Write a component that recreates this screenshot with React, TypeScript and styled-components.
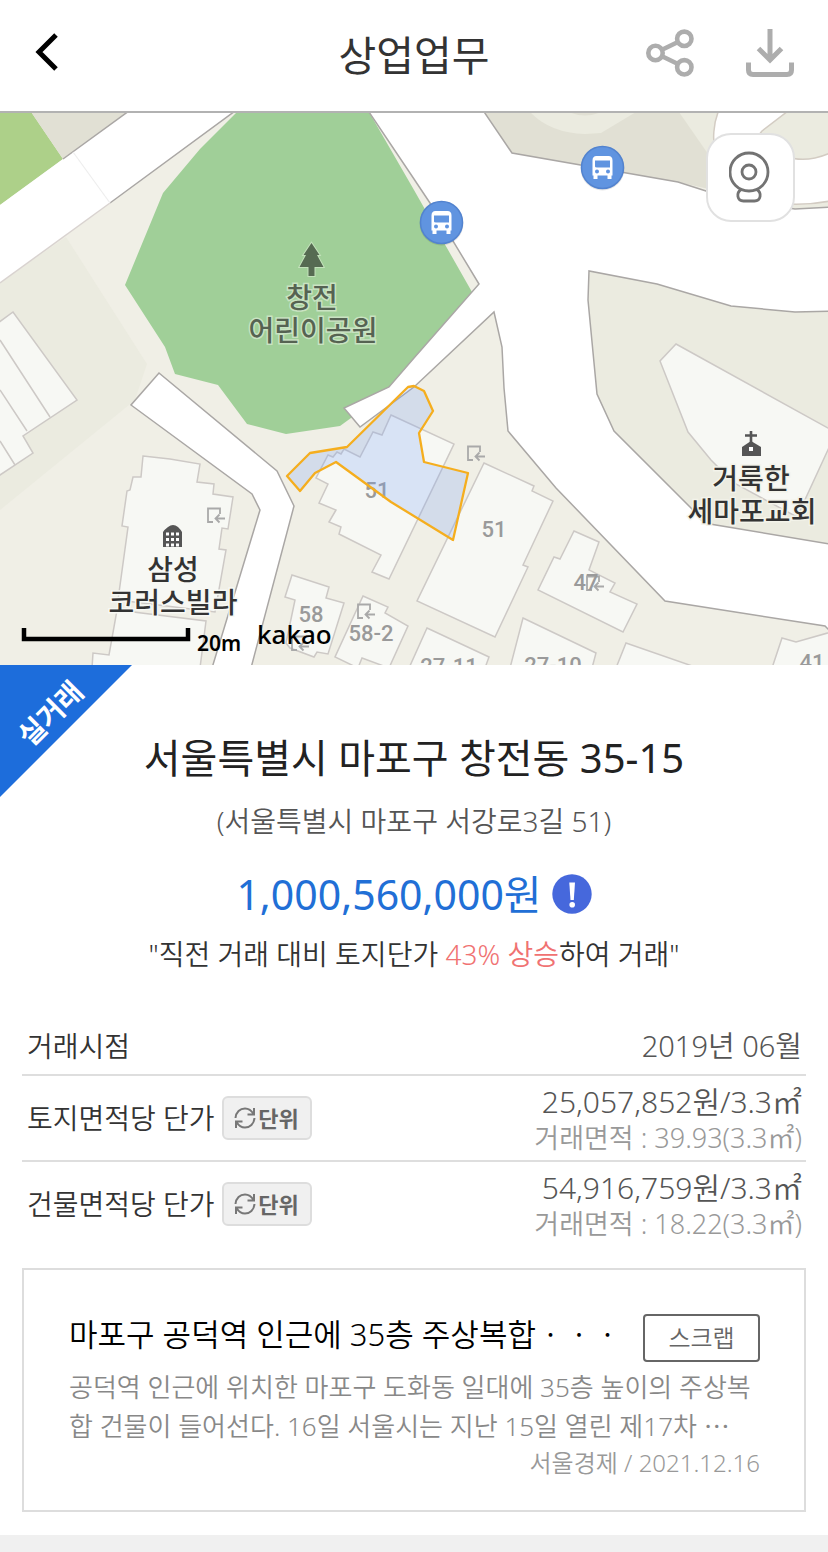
import React from "react";
import styled, { createGlobalStyle } from "styled-components";

const GlobalStyle = createGlobalStyle`
  *, *::before, *::after { box-sizing: border-box; }
  body {
    margin: 0;
    background: #ffffff;
    color: #222222;
    font-family: "Noto Sans", "Noto Sans CJK KR", sans-serif;
    font-weight: 350;
  }
  button { font-family: inherit; padding: 0; cursor: pointer; }
  h1, h2, h3, p { margin: 0; }
`;

const Page = styled.main`
  min-height: 100vh;
  display: flex;
  flex-direction: column;
`;

const Header = styled.header`
  display: grid;
  grid-template-columns: 1fr auto 1fr;
  align-items: center;
  height: 113px;
  padding: 0 34px 6px;
  border-bottom: 2px solid #b2b2b2;
`;

const HeaderTitle = styled.h1`
  padding-top: 4px;
  font-size: 41px;
  line-height: 56px;
  font-weight: 400;
  color: #333333;
`;

const HeaderActions = styled.div`
  display: flex;
  justify-content: flex-end;
  gap: 52px;
`;

const IconButton = styled.button`
  display: flex;
  width: 48px;
  height: 48px;
  border: 0;
  background: none;
`;

const MapPanel = styled.section`
  position: relative;
  height: 552px;
  overflow: hidden;
  background: #f0efe6;
`;

const MapSvg = styled.svg`
  display: block;
  width: 100%;
  height: 100%;
`;

const RoadviewButton = styled.button`
  position: absolute;
  top: 20px;
  right: 33px;
  display: flex;
  align-items: center;
  justify-content: center;
  width: 89px;
  height: 89px;
  border: 2px solid #e1e1e1;
  border-radius: 25px;
  background: #ffffff;
`;

const Place = styled.text<{ $tone: string; $halo: string }>`
  font-family: "Noto Sans CJK KR", sans-serif;
  font-size: 28px;
  font-weight: 500;
  text-anchor: middle;
  fill: ${(p) => p.$tone};
  stroke: ${(p) => p.$halo};
  stroke-width: 3px;
  paint-order: stroke;
`;

const Lot = styled.text`
  font-family: Roboto, "Liberation Sans", sans-serif;
  font-size: 22px;
  font-weight: 500;
  text-anchor: middle;
  fill: #9a9a9a;
`;

const MapMark = styled.text<{ $size: number; $weight: number }>`
  font-family: "Noto Sans", sans-serif;
  font-size: ${(p) => p.$size}px;
  font-weight: ${(p) => p.$weight};
  fill: #000000;
`;

const Summary = styled.section`
  position: relative;
  display: flex;
  flex-direction: column;
  align-items: center;
  padding: 65px 22px 0;
  text-align: center;
`;

const Ribbon = styled.div`
  position: absolute;
  top: 0;
  left: 0;
  width: 132px;
  height: 132px;
  background: #1d6ddb;
  clip-path: polygon(0 0, 100% 0, 0 100%);
`;

const RibbonText = styled.span`
  position: absolute;
  top: 28px;
  left: 0;
  width: 100px;
  line-height: 40px;
  font-size: 28px;
  font-weight: 700;
  color: #ffffff;
  transform: rotate(-45deg);
`;

const Address = styled.h2`
  font-size: 40px;
  line-height: 56px;
  font-weight: 400;
  color: #222222;
`;

const RoadAddress = styled.p`
  margin-top: 15px;
  font-size: 28px;
  line-height: 40px;
  color: #555555;
`;

const PriceRow = styled.div`
  display: flex;
  align-items: center;
  gap: 10px;
  margin-top: 25px;
`;

const Price = styled.strong`
  font-size: 41px;
  line-height: 56px;
  font-weight: 400;
  color: #216fd6;
`;

const InfoButton = styled.button`
  display: flex;
  width: 40px;
  height: 40px;
  border: 0;
  background: none;
`;

const Quote = styled.p`
  margin-top: 12px;
  font-size: 28px;
  line-height: 40px;
  color: #333333;
`;

const Rise = styled.span`
  color: #f07272;
`;

const Facts = styled.div`
  padding: 44px 22px 0;
`;

const FactTable = styled.table`
  width: 100%;
  border-collapse: separate;
  border-spacing: 0;
`;

const FactRow = styled.tr`
  & + & > * { border-top: 2px solid #dedede; }
`;

const FactLabel = styled.th`
  height: 56px;
  padding: 0 0 0 5px;
  text-align: left;
  font-size: 28px;
  line-height: 36px;
  font-weight: 350;
  color: #333333;
`;

const LabelLine = styled.div`
  display: flex;
  align-items: center;
  gap: 7px;
`;

const FactValue = styled.td<{ $double?: boolean }>`
  padding: ${(p) => (p.$double ? "8px 4px 4px 0" : "0 4px 0 0")};
  text-align: right;
  font-size: ${(p) => (p.$double ? 30 : 29)}px;
  line-height: 36px;
  color: #555555;
`;

const FactNote = styled.div`
  font-size: 27px;
  line-height: 36px;
  color: #999999;
`;

const UnitButton = styled.button`
  display: flex;
  align-items: center;
  justify-content: center;
  gap: 2px;
  width: 90px;
  height: 44px;
  border: 2px solid #dddddd;
  border-radius: 6px;
  background: #f0f0f0;
  color: #666666;
  font-size: 22px;
  line-height: 32px;
  font-weight: 700;
`;

const NewsCard = styled.article`
  margin: 22px 22px 0;
  padding: 44px 44px 30px 45px;
  border: 2px solid #dddddd;
`;

const NewsHead = styled.div`
  display: flex;
  align-items: center;
  justify-content: space-between;
`;

const NewsTitle = styled.h3`
  font-size: 31px;
  line-height: 40px;
  font-weight: 350;
  color: #000000;
  padding-bottom: 8px;
  white-space: nowrap;
`;

const ScrapButton = styled.button`
  flex: none;
  width: 117px;
  height: 48px;
  border: 2px solid #666666;
  border-radius: 4px;
  background: #ffffff;
  color: #666666;
  font-size: 24px;
  line-height: 32px;
  font-weight: 350;
`;

const NewsBody = styled.p`
  margin-top: 6px;
  font-size: 26px;
  line-height: 39px;
  color: #888888;
  word-break: break-all;
`;

const NewsSource = styled.p`
  font-size: 24px;
  line-height: 34px;
  text-align: right;
  color: #999999;
`;

const SectionBand = styled.div`
  flex: 1;
  min-height: 17px;
  margin-top: 23px;
  background: #f0f0f0;
`;

const BackIcon = () => (
  <svg width="48" height="48" viewBox="0 0 48 48" fill="none" stroke="#000" strokeWidth="5" aria-hidden="true">
    <path d="M22 6 5 23 22 40" />
  </svg>
);

const ShareIcon = () => (
  <svg width="48" height="48" viewBox="0 0 48 48" fill="none" stroke="#adadad" strokeWidth="4.600" aria-hidden="true">
    <circle cx="9.500" cy="24" r="7.200" />
    <circle cx="38.300" cy="9.800" r="7.200" />
    <circle cx="38.300" cy="38.300" r="7.200" />
    <path d="M16 20.800 32 13M16 27.200 32 35" />
  </svg>
);

const DownloadIcon = () => (
  <svg width="48" height="48" viewBox="0 0 48 48" fill="none" stroke="#adadad" strokeWidth="5" aria-hidden="true">
    <path d="M24 0V31M12.500 19.500 24 31 35.500 19.500" />
    <path d="M2.500 33.500V41Q2.500 45.500 7 45.500H41Q45.500 45.500 45.500 41V33.500" />
  </svg>
);

const RoadviewIcon = () => (
  <svg width="44" height="54" viewBox="0 0 44 54" fill="none" stroke="#737373" strokeWidth="2.800" aria-hidden="true">
    <circle cx="20" cy="21" r="19" />
    <circle cx="20" cy="21" r="7" />
    <path d="M12 38.500C7 42 8 50 14.500 50H25.500C32 50 33 42 28 38.500" />
  </svg>
);

const AlertIcon = () => (
  <svg width="40" height="40" viewBox="0 0 40 40" aria-hidden="true">
    <circle cx="20" cy="20" r="19.700" fill="#4668dc" />
    <path d="M17.300 8.500H23L21.800 26H18.500Z" fill="#fff" />
    <circle cx="20.200" cy="30.800" r="2.800" fill="#fff" />
  </svg>
);

const RefreshIcon = () => (
  <svg width="22" height="22" viewBox="0 0 22 22" fill="none" stroke="#777" strokeWidth="2" aria-hidden="true">
    <path d="M1.500 11C2 5 6 1.500 11 1.500C14.500 1.500 17.500 3.500 19.500 7M20 1V7.500H13.500" />
    <path d="M20.500 11C20 17 16 20.500 11 20.500C7.500 20.500 4.500 18.500 2.500 15M2 21V14.500H8.500" />
  </svg>
);

const BusStop = ({ x, y }: { x: number; y: number }) => (
  <g transform={`translate(${x} ${y})`}>
    <circle r="22" cy="1" fill="#000" opacity="0.100" />
    <circle r="21" fill="#6094e0" stroke="#5283cf" strokeWidth="1.500" />
    <path
      fill="#fff"
      fillRule="evenodd"
      d="M-10 -7Q-10 -11.500 -6 -11.500H6Q10 -11.500 10 -7V8H9V11.500H5V8H-5V11.500H-9V8H-10ZM-7.500 -7H7.500V0H-5.500Q-7.500 0 -7.500 -1ZM-7.500 4A2 2 0 1 0 -3.500 4A2 2 0 1 0 -7.500 4ZM3.500 4A2 2 0 1 0 7.500 4A2 2 0 1 0 3.500 4Z"
    />
  </g>
);

const Entrance = ({ x, y }: { x: number; y: number }) => (
  <path
    transform={`translate(${x} ${y})`}
    d="M6 14H1V0.500H13V6M18 10.500H9M12.500 6.500 8.500 10.500 12.500 14.500"
    fill="none"
    stroke="#a9a9a9"
    strokeWidth="1.800"
  />
);

const buildings = [
  "-9,328 13,312 77,400 23,436 33,453 -9,481",
  "143,456 170,459 200,464 197,482 214,484 213,494 233,497 228,529 222,528 219,549 226,550 215,612 118,600 128,527 122,526 127,491 130,490 133,477 141,477",
  "117,610 206,621 200,668 92,668 93,653 109,655",
  "391,415 454,444 389,579 372,572 381,555 339,534 341,527 329,522 336,510 319,503 328,484 316,478 328,455 333,457 337,452 341,454 344,449 360,457 373,432 382,435",
  "484,463 534,486 532,491 553,501 523,565 528,567 495,637 417,601",
  "574,531 599,542 589,570 615,583 610,592 637,604 623,632 538,590 554,557 560,559",
  "427,628 489,657 485,668 409,668",
  "523,618 596,653 592,668 510,668",
  "626,643 698,668 616,668",
  "782,638 796,642 838,630 838,668 772,668",
  "292,575 329,587 326,598 344,603 328,654 317,652 314,657 290,648 286,643 295,600 285,597",
  "363,596 388,607 385,613 408,626 389,668 362,658 358,668 335,657",
  "676,344 828,428 838,428 797,517 734,483 711,460 688,432 660,361",
];

const parcel =
  "287,476 310,453 347,447 408,387 414,386 424,391 433,411 419,433 424,462 468,473 453,540 391,502 336,462 315,473 300,491";

const roadEdge = "#aaa7a5";

const NeighborhoodMap = () => (
  <MapSvg viewBox="0 113 828 552" preserveAspectRatio="xMidYMid slice" role="img" aria-label="창전동 지도">
    <polygon points="0,283 66,237 147,364 135,400 0,510" fill="#ebebe0" />
    <polygon points="0,100 23,100 63,159 0,205" fill="#add089" />
    <polygon points="23,100 144,100 63,159" fill="#e1e0d4" />
    <polygon points="144,100 250,100 110,203 0,283 0,205" fill="#fff" />
    <path d="M144 100 63 159M250 100 110 203" stroke={roadEdge} strokeWidth="1.500" />
    <path d="M110 203 0 283" stroke="#d9d3d0" strokeWidth="1.500" />
    <path d="M73 152 110 203" stroke="#eeeeee" strokeWidth="1.200" />

    <polygon
      points="237,112 200,149 163,193 125,285 165,347 175,374 218,385 247,424 286,434 340,426 362,410 420,370 472,292 414,190 369,112"
      fill="#a0cf98"
    />

    <polygon points="470,90 830,90 830,208 795,209 678,182 512,153" fill="#e1e0d4" />
    <path d="M530 112Q550 133 585 134L601 133L636 112Z" fill="#ebebe0" />
    <path d="M569 112Q585 119 601 112Z" fill="#e1e0d4" />
    <polygon points="679,112 830,112 830,208 795,209 740,200" fill="#ebebe0" />
    <path
      d="M719 110C708 135 712 180 750 198Q790 209 830 201V153Q805 164 785 156Q745 150 762 131L788 111Z"
      fill="#fff"
      stroke="#d3ccc3"
      strokeWidth="1.500"
    />

    <polygon
      points="589,271 657,284 731,306 795,312 828,311 828,544 704,523 691,508 614,431 597,394 588,300"
      fill="#ebebe0"
    />
    <polygon
      points="361,103 369,112 414,179 430,203 479,284 414,358 389,387 344,408 360,427 414,387 494,312 502,347 504,388 508,431 556,488 665,601 825,626 835,636 835,545 704,523 691,508 614,431 597,394 588,300 589,271 657,284 731,306 795,312 835,311 835,207 795,209 750,203 706,191 678,182 512,153 476,100"
      fill="#fff"
      stroke={roadEdge}
      strokeWidth="1.500"
    />
    <polygon
      points="159,373 277,471 294,506 251,668 212,668 260,510 252,494 131,405"
      fill="#fff"
      stroke={roadEdge}
      strokeWidth="1.500"
    />

    {buildings.map((points) => (
      <polygon key={points} points={points} fill="#f7f8f4" stroke="#cdc9c6" strokeWidth="1.500" />
    ))}
    <path d="M0 340 50 417M0 390 27 431M0 441 15 465" stroke="#cdc9c6" strokeWidth="1.500" />

    <Entrance x={207} y={508} />
    <Entrance x={467} y={446} />
    <Entrance x={357} y={604} />
    <Entrance x={291} y={636} />
    <Entrance x={586} y={576} />

    <Lot x="377" y="498">51</Lot>
    <Lot x="494" y="537">51</Lot>
    <Lot x="586" y="590">47</Lot>
    <Lot x="311" y="622">58</Lot>
    <Lot x="371" y="641">58-2</Lot>
    <Lot x="449" y="674">27-11</Lot>
    <Lot x="553" y="673">27-10</Lot>
    <Lot x="812" y="670">41</Lot>

    <polygon
      points={parcel}
      fill="#7ca3f6"
      fillOpacity="0.250"
      stroke="#f5ae1e"
      strokeWidth="2.300"
      strokeLinejoin="round"
    />

    <path
      d="M311.500 243 319.500 255H317L323.500 267H314.500V276H308.500V267H299.500L306 255H303.500Z"
      fill="#566b52"
      stroke="#c3e2bb"
      strokeWidth="2"
      paintOrder="stroke"
    />
    <Place x="312" y="308" $tone="#566352" $halo="#c9e3c2">창전</Place>
    <Place x="313" y="341" $tone="#566352" $halo="#c9e3c2">어린이공원</Place>

    <path d="M163 547V532Q164 530 168 527Q173 523 178 527Q181 530 182 532V547Z" fill="#555" />
    <path d="M166 534H179M166 539.500H179M166 545H179" stroke="#fff" strokeWidth="3" strokeDasharray="3 2" />
    <Place x="173" y="580" $tone="#333333" $halo="#f7f8f4">삼성</Place>
    <Place x="173" y="613" $tone="#333333" $halo="#f7f8f4">코러스빌라</Place>

    <path d="M751 431V444M745 435.500H757" stroke="#555" strokeWidth="2.600" />
    <path d="M742 456V447L751 441 761 447V456Z" fill="#555" />
    <rect x="749" y="447" width="4" height="4" fill="#fff" />
    <Place x="751" y="489" $tone="#333333" $halo="#f3f3ea">거룩한</Place>
    <Place x="752" y="522" $tone="#333333" $halo="#f3f3ea">세마포교회</Place>

    <BusStop x={441.5} y={222.5} />
    <BusStop x={602.5} y={167.5} />

    <path d="M24 628V639H188V628" fill="none" stroke="#000" strokeWidth="4.500" />
    <MapMark x="197" y="651" $size={21} $weight={600}>20m</MapMark>
    <MapMark x="257" y="644" $size={26} $weight={500}>kakao</MapMark>
  </MapSvg>
);

type UnitPrice = { label: string; price: string; area: string };

const unitPrices: UnitPrice[] = [
  { label: "토지면적당 단가", price: "25,057,852원/3.3㎡", area: "39.93(3.3㎡)" },
  { label: "건물면적당 단가", price: "54,916,759원/3.3㎡", area: "18.22(3.3㎡)" },
];

export default function App() {
  return (
    <>
      <GlobalStyle />
      <Page>
        <Header>
          <IconButton type="button" aria-label="뒤로">
            <BackIcon />
          </IconButton>
          <HeaderTitle>상업업무</HeaderTitle>
          <HeaderActions>
            <IconButton type="button" aria-label="공유">
              <ShareIcon />
            </IconButton>
            <IconButton type="button" aria-label="다운로드">
              <DownloadIcon />
            </IconButton>
          </HeaderActions>
        </Header>

        <MapPanel>
          <NeighborhoodMap />
          <RoadviewButton type="button" aria-label="로드뷰">
            <RoadviewIcon />
          </RoadviewButton>
        </MapPanel>

        <Summary>
          <Ribbon>
            <RibbonText>실거래</RibbonText>
          </Ribbon>
          <Address>서울특별시 마포구 창전동 35-15</Address>
          <RoadAddress>(서울특별시 마포구 서강로3길 51)</RoadAddress>
          <PriceRow>
            <Price>1,000,560,000원</Price>
            <InfoButton type="button" aria-label="거래 정보">
              <AlertIcon />
            </InfoButton>
          </PriceRow>
          <Quote>
            "직전 거래 대비 토지단가 <Rise>43% 상승</Rise>하여 거래"
          </Quote>
        </Summary>

        <Facts>
          <FactTable>
            <tbody>
              <FactRow>
                <FactLabel scope="row">거래시점</FactLabel>
                <FactValue>2019년 06월</FactValue>
              </FactRow>
              {unitPrices.map((item) => (
                <FactRow key={item.label}>
                  <FactLabel scope="row">
                    <LabelLine>
                      {item.label}
                      <UnitButton type="button">
                        <RefreshIcon />
                        단위
                      </UnitButton>
                    </LabelLine>
                  </FactLabel>
                  <FactValue $double>
                    {item.price}
                    <FactNote>거래면적 : {item.area}</FactNote>
                  </FactValue>
                </FactRow>
              ))}
            </tbody>
          </FactTable>
        </Facts>

        <NewsCard>
          <NewsHead>
            <NewsTitle>마포구 공덕역 인근에 35층 주상복합ㆍㆍㆍ</NewsTitle>
            <ScrapButton type="button">스크랩</ScrapButton>
          </NewsHead>
          <NewsBody>
            공덕역 인근에 위치한 마포구 도화동 일대에 35층 높이의 주상복합 건물이 들어선다. 16일 서울시는 지난 15일 열린 제17차 ⋯
          </NewsBody>
          <NewsSource>서울경제 / 2021.12.16</NewsSource>
        </NewsCard>

        <SectionBand />
      </Page>
    </>
  );
}
